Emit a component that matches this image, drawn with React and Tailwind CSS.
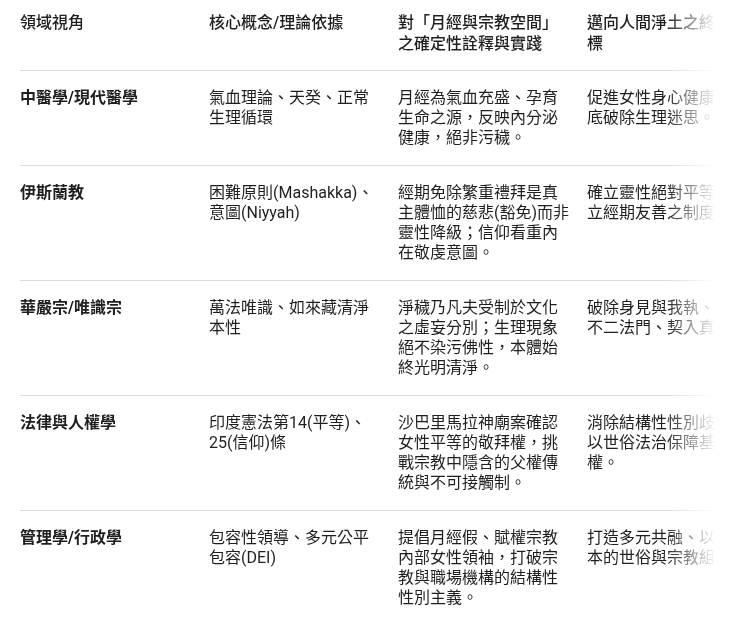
const headers = ['領域視角', '核心概念/理論依據', '對「月經與宗教空間」之確定性詮釋與實踐', '邁向人間淨土之終極目標'];

const rows = [
  ['中醫學/現代醫學', '氣血理論、天癸、正常生理循環', '月經為氣血充盛、孕育生命之源，反映內分泌健康，絕非污穢。', '促進女性身心健康，徹底破除生理迷思。'],
  ['伊斯蘭教', '困難原則(Mashakka)、意圖(Niyyah)', '經期免除繁重禮拜是真主體恤的慈悲(豁免)而非靈性降級；信仰看重內在敬虔意圖。', '確立靈性絕對平等，建立經期友善之制度。'],
  ['華嚴宗/唯識宗', '萬法唯識、如來藏清淨本性', '淨穢乃凡夫受制於文化之虛妄分別；生理現象絕不染污佛性，本體始終光明清淨。', '破除身見與我執、證悟不二法門、契入真如。'],
  ['法律與人權學', '印度憲法第14(平等)、25(信仰)條', '沙巴里馬拉神廟案確認女性平等的敬拜權，挑戰宗教中隱含的父權傳統與不可接觸制。', '消除結構性性別歧視，以世俗法治保障基本人權。'],
  ['管理學/行政學', '包容性領導、多元公平包容(DEI)', '提倡月經假、賦權宗教內部女性領袖，打破宗教與職場機構的結構性性別主義。', '打造多元共融、以人為本的世俗與宗教組織。'],
];

export default function App() {
  return (
    <div className="min-h-[618px] bg-white pl-5 pr-6 text-[#1f1f1f]" style={{ fontFamily: 'Roboto, "Noto Sans CJK TC", sans-serif' }}>
      <div className="overflow-hidden [mask-image:linear-gradient(to_right,black_0,black_calc(100%-50px),transparent_100%)]">
        <table className="w-[756px] table-fixed border-collapse text-[16px] leading-[20px]">
          <thead>
            <tr className="border-b border-[#dadce0]">
              {headers.map((h, i) => (
                <th key={i} className="w-[189px] pr-4 pt-[12px] pb-[16px] text-left align-top font-medium leading-[21px]">{h}</th>
              ))}
            </tr>
          </thead>
          <tbody>
            {rows.map((r, ri) => (
              <tr key={ri} className={ri < rows.length - 1 ? 'border-b border-[#dadce0]' : ''}>
                {r.map((c, ci) => (
                  <td key={ci} className={`pr-4 pt-[17px] pb-[17px] align-top ${ci === 0 ? 'font-bold' : ''}`}>{c}</td>
                ))}
              </tr>
            ))}
          </tbody>
        </table>
      </div>
    </div>
  );
}
